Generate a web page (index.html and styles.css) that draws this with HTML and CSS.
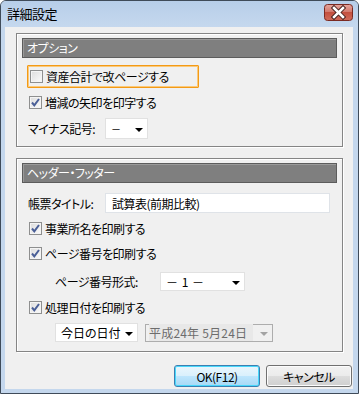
FILE: index.html
```html
<!DOCTYPE html>
<html lang="ja">
<head>
    <meta charset="UTF-8">
    <title>詳細設定</title>
    <link rel="stylesheet" href="styles.css">
</head>
<body>
    <div class="window">
        <div class="titlebar">
            <span class="title">詳細設定</span>
            <span class="close">
                <svg width="29" height="17" viewBox="0 0 29 17">
                    <defs>
                        <linearGradient id="cg" x1="0" y1="0" x2="0" y2="1">
                            <stop offset="0" stop-color="#e6a69e"/>
                            <stop offset="0.45" stop-color="#d37a6e"/>
                            <stop offset="0.5" stop-color="#c4503f"/>
                            <stop offset="1" stop-color="#d06b5a"/>
                        </linearGradient>
                    </defs>
                    <rect x="0.5" y="0.5" width="28" height="16" rx="3" fill="url(#cg)" stroke="#7b2a22"/>
                    <path d="M10 4 L19 13 M19 4 L10 13" stroke="#4a2420" stroke-width="4.5" stroke-linecap="square"/>
                    <path d="M10 4 L19 13 M19 4 L10 13" stroke="#fff" stroke-width="2.5" stroke-linecap="square"/>
                </svg>
            </span>
        </div>
        <div class="client">
            <div class="group group-option">
                <div class="group-head">オプション</div>
                <div class="check focus">
                    <span class="box"></span>
                    <span class="text">資産合計で改ページする</span>
                </div>
                <div class="check row-sign-check">
                    <span class="box checked"></span>
                    <span class="text">増減の矢印を印字する</span>
                </div>
                <div class="field row-sign">
                    <span class="label">マイナス記号:</span>
                    <span class="combo combo-sign"><span class="value">－</span><i class="arrow"></i></span>
                </div>
            </div>

            <div class="group group-header">
                <div class="group-head">ヘッダー・フッター</div>
                <div class="field row-title">
                    <span class="label">帳票タイトル:</span>
                    <span class="textbox">試算表(前期比較)</span>
                </div>
                <div class="check row-office">
                    <span class="box checked"></span>
                    <span class="text">事業所名を印刷する</span>
                </div>
                <div class="check row-page">
                    <span class="box checked"></span>
                    <span class="text">ページ番号を印刷する</span>
                </div>
                <div class="field row-format">
                    <span class="label">ページ番号形式:</span>
                    <span class="combo combo-format"><span class="value">－ 1 －</span><i class="arrow"></i></span>
                </div>
                <div class="check row-date-check">
                    <span class="box checked"></span>
                    <span class="text">処理日付を印刷する</span>
                </div>
                <div class="field row-date">
                    <span class="combo combo-day"><span class="value">今日の日付</span><i class="arrow"></i></span>
                    <span class="combo combo-disabled"><span class="value">平成24年 5月24日</span><i class="arrow"></i></span>
                </div>
            </div>

            <div class="buttons">
                <button class="btn btn-default">OK(F12)</button>
                <button class="btn">キャンセル</button>
            </div>
        </div>
    </div>
</body>
</html>
```

FILE: styles.css
```css
* {
    box-sizing: border-box;
}
body {
    margin: 0;
    font-family: "Noto Sans CJK JP", "Liberation Sans", sans-serif;
    font-size: 12px;
    font-feature-settings: "palt";
    color: #000;
    background-color: #fff;
}
.window {
    width: 359px;
    height: 394px;
    border: 1px solid #3f4b59;
    border-radius: 6px 6px 0 0;
    background-color: #c4d7ed;
    display: flex;
    flex-direction: column;
    overflow: hidden;
}
.titlebar {
    height: 26px;
    flex: none;
    display: flex;
    align-items: center;
    justify-content: space-between;
    padding: 0 5px 0 6px;
    background: linear-gradient(#b7cee9, #c5d8ee);
}
.title {
    font-size: 13px;
    letter-spacing: -0.5px;
    margin-top: -1px;
}
.close {
    display: block;
    height: 17px;
    margin-top: -4px;
}
.close svg {
    display: block;
}
.client {
    flex: 1;
    margin: 0 5px 4px 4px;
    background-color: #f0f0f0;
    padding: 6px 0 0 11px;
    display: flex;
    flex-direction: column;
}
.group {
    flex: none;
    margin-right: 10px;
    border: 1px solid #858585;
    box-shadow: inset 1px 1px 0 #fff, 1px 1px 0 #fff;
    padding: 4px 5px;
    display: flex;
    flex-direction: column;
}
.group-option {
    height: 114px;
}
.group-header {
    height: 194px;
    margin-top: 11px;
}
.group-head {
    height: 20px;
    flex: none;
    background-color: #7f7f7f;
    border: 1px solid #5c5c5c;
    box-shadow: inset 1px 1px 0 #9a9a9a;
    color: #fff;
    line-height: 17px;
    padding-left: 4px;
    letter-spacing: -0.5px;
}
.check, .field {
    display: flex;
    align-items: center;
    height: 20px;
    flex: none;
    letter-spacing: -0.5px;
}
.box {
    width: 13px;
    height: 13px;
    flex: none;
    border: 1px solid #8e8f8f;
    background: linear-gradient(135deg, #dcdcdc, #fbfbfb);
    box-shadow: inset 0 0 0 1px #f4f4f4;
    margin-right: 3px;
}
.box.checked {
    background: url("data:image/svg+xml,%3Csvg xmlns='http://www.w3.org/2000/svg' width='11' height='11'%3E%3Cpath d='M2 5.5 L4.3 8.3 L9 2' fill='none' stroke='%234a5f97' stroke-width='2'/%3E%3C/svg%3E") no-repeat center, linear-gradient(135deg, #dcdcdc, #fbfbfb);
}
.check.focus {
    height: 23px;
    width: 172px;
    margin: 7px 0 0 5px;
    padding-left: 2px;
    border: 1px solid #f39a16;
    box-shadow: inset 0 0 0 1px #fbc979;
    border-radius: 1px;
}
.row-sign-check {
    margin: 4px 0 0 7px;
}
.row-sign {
    height: 21px;
    margin: 6px 0 0 6px;
}
.label {
    width: 77px;
    flex: none;
}
.combo, .textbox {
    display: flex;
    align-items: center;
    height: 100%;
    background-color: #fff;
    border: 1px solid #e1e1e1;
    padding-left: 5px;
    position: relative;
}
.combo .value {
    flex: 1;
    white-space: pre;
}
.arrow {
    width: 0;
    height: 0;
    border-left: 4px solid transparent;
    border-right: 4px solid transparent;
    border-top: 4px solid #000;
    margin-right: 4px;
    margin-top: 2px;
}
.combo-sign {
    width: 43px;
}
.combo-sign .value {
    font-size: 10px;
}
.row-title {
    margin: 10px 0 0 6px;
}
.textbox {
    width: 225px;
    border-color: #dfe3e8;
    padding-left: 6px;
}
.row-office {
    margin: 5px 0 0 7px;
}
.row-page {
    margin: 5px 0 0 7px;
}
.row-format {
    height: 19px;
    margin: 9px 0 0 33px;
}
.row-format .label {
    width: 105px;
}
.combo-format {
    width: 85px;
}
.combo-format .value {
    font-feature-settings: normal;
    word-spacing: 2px;
}
.row-date-check {
    margin: 6px 0 0 7px;
}
.row-date {
    height: 19px;
    margin: 6px 0 0 33px;
    gap: 7px;
}
.combo-day {
    width: 83px;
}
.combo-day .value {
    letter-spacing: 0;
}
.combo-disabled {
    width: 128px;
    height: 18px;
    background-color: #f0f0f0;
    border-color: #adadad;
    color: #6d6d6d;
    padding-left: 3px;
}
.combo-disabled .value {
    flex: none;
    width: 104px;
    overflow: hidden;
    background-color: #e8e8e8;
    font-feature-settings: normal;
    letter-spacing: 0.2px;
}
.combo-disabled .arrow {
    border-top-color: #a3a3a3;
    margin-left: auto;
}
.buttons {
    display: flex;
    justify-content: flex-end;
    gap: 6px;
    margin-top: 13px;
    padding-right: 1px;
}
.btn {
    width: 86px;
    height: 22px;
    font-family: inherit;
    font-size: 12px;
    font-feature-settings: "palt";
    letter-spacing: -0.5px;
    color: #000;
    border: 1px solid #707070;
    border-radius: 3px;
    background: linear-gradient(#f2f2f2, #ebebeb 50%, #dddddd 50%, #cfcfcf);
    box-shadow: inset 0 0 0 1px #fcfcfc;
    padding: 0;
}
.btn-default {
    border-color: #3c7fb1;
    background: linear-gradient(#eaf6fd, #d9f0fc 50%, #bee6fd 50%, #a7d9f5);
    box-shadow: inset 0 0 0 1px #48d8fb;
}
```
